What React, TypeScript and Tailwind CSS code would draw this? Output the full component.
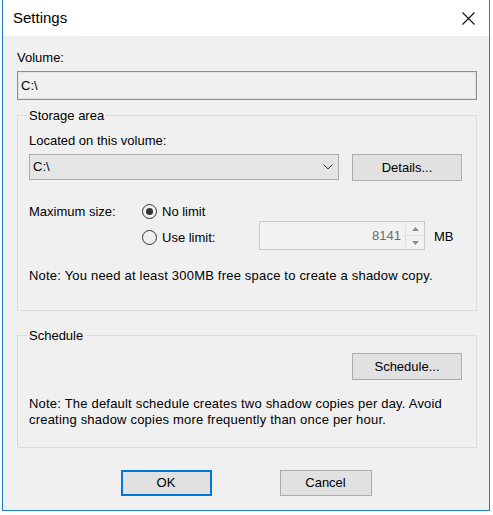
import React from "react";

const font = { fontFamily: '"Liberation Sans", Arial, sans-serif' };

function Radio({ checked }: { checked?: boolean }) {
  return (
    <span className="w-[15px] h-[15px] rounded-full border border-[#333] bg-[#f0f0f0] flex items-center justify-center shrink-0">
      {checked && <span className="w-[7px] h-[7px] rounded-full bg-[#333]" />}
    </span>
  );
}

function WinButton({ children, className = "" }: { children: React.ReactNode; className?: string }) {
  return (
    <button
      className={`h-[27px] bg-[#e1e1e1] border border-[#adadad] text-[13px] text-black flex items-center justify-center ${className}`}
    >
      {children}
    </button>
  );
}

export default function App() {
  return (
    <div className="w-[493px] h-[515px] bg-white overflow-hidden text-[13px] text-black" style={font}>
      <div className="ml-[2px] w-[488px] h-[511px] border-x border-b border-[#1a7fd4] flex flex-col">
        {/* title bar */}
        <div className="h-[36px] bg-white flex items-center justify-between pl-[10px] pr-[13px] shrink-0">
          <span className="text-[15px] leading-[18px] text-black">Settings</span>
          <svg width="13" height="13" viewBox="0 0 13 13" className="mr-[1px]">
            <path d="M0.5 0.5 L12.5 12.5 M12.5 0.5 L0.5 12.5" stroke="#111" strokeWidth="1.1" fill="none" />
          </svg>
        </div>

        <div className="flex-1 bg-[#f0f0f0] pl-[14px] pt-[14px]">
          <div className="w-[460px]">
            <div className="leading-[15px]">Volume:</div>
            <div className="mt-[6px] h-[29px] border border-[#8f8f8f] shadow-[inset_0_0_0_1px_#e3e3e3] flex items-center pl-[3px] bg-[#f0f0f0]">
              C:\
            </div>

            {/* storage area */}
            <fieldset className="mt-[8px] border border-[#dcdcdc] pl-[11px] pr-[14px] pt-[10px] pb-[27px]">
              <legend className="px-[2px] -ml-[2px] leading-[15px]">Storage area</legend>
              <div className="leading-[15px]">Located on this volume:</div>
              <div className="mt-[6px] flex items-start justify-between">
                <div className="w-[310px] h-[26px] bg-[#e5e5e5] border border-[#acacac] flex items-center justify-between pl-[3px] pr-[5px]">
                  <span>C:\</span>
                  <svg width="10" height="6" viewBox="0 0 10 6">
                    <path d="M0.5 0.5 L5 5 L9.5 0.5" stroke="#333" strokeWidth="1" fill="none" />
                  </svg>
                </div>
                <WinButton className="w-[110px]">Details...</WinButton>
              </div>

              <div className="mt-[22px] flex items-center h-[16px]">
                <span className="w-[113px] leading-[15px]">Maximum size:</span>
                <Radio checked />
                <span className="ml-[5px] leading-[15px]">No limit</span>
              </div>
              <div className="mt-[2px] flex items-center h-[29px]">
                <span className="w-[113px]" />
                <div className="flex items-center w-[117px] pt-[3px]">
                  <Radio />
                  <span className="ml-[5px] leading-[15px]">Use limit:</span>
                </div>
                <div className="w-[166px] h-[29px] border border-[#c9c9c9] bg-[#f2f2f2] flex">
                  <div className="flex-1 flex items-center justify-end pr-[4px] text-[#6d6d6d]">8141</div>
                  <div className="w-[19px] flex flex-col border-l border-[#e0e0e0]">
                    <div className="flex-1 flex items-center justify-center border-b border-[#e0e0e0]">
                      <svg width="7" height="4" viewBox="0 0 7 4">
                        <path d="M0 4 L3.5 0 L7 4 Z" fill="#8a8a8a" />
                      </svg>
                    </div>
                    <div className="flex-1 flex items-center justify-center">
                      <svg width="7" height="4" viewBox="0 0 7 4">
                        <path d="M0 0 L3.5 4 L7 0 Z" fill="#8a8a8a" />
                      </svg>
                    </div>
                  </div>
                </div>
                <span className="ml-[9px] pt-[2px]">MB</span>
              </div>
              <div className="mt-[18px] leading-[15px] tracking-[0.2px]">
                Note: You need at least 300MB free space to create a shadow copy.
              </div>
            </fieldset>

            {/* schedule */}
            <fieldset className="mt-[17px] border border-[#dcdcdc] pl-[11px] pr-[14px] pt-[10px] pb-[19px]">
              <legend className="px-[2px] -ml-[2px] leading-[15px]">Schedule</legend>
              <div className="flex justify-end">
                <WinButton className="w-[110px]">Schedule...</WinButton>
              </div>
              <div className="mt-[16px] leading-[16px] tracking-[0.2px]">
                Note: The default schedule creates two shadow copies per day. Avoid
                <br />
                creating shadow copies more frequently than once per hour.
              </div>
            </fieldset>
          </div>

          <div className="mt-[22px] flex justify-center gap-[68px] pr-[14px]">
            <button className="w-[91px] h-[26px] bg-[#e1e1e1] border-2 border-[#0078d7] flex items-center justify-center">
              OK
            </button>
            <WinButton className="w-[92px] !h-[26px]">Cancel</WinButton>
          </div>
        </div>
      </div>
    </div>
  );
}
